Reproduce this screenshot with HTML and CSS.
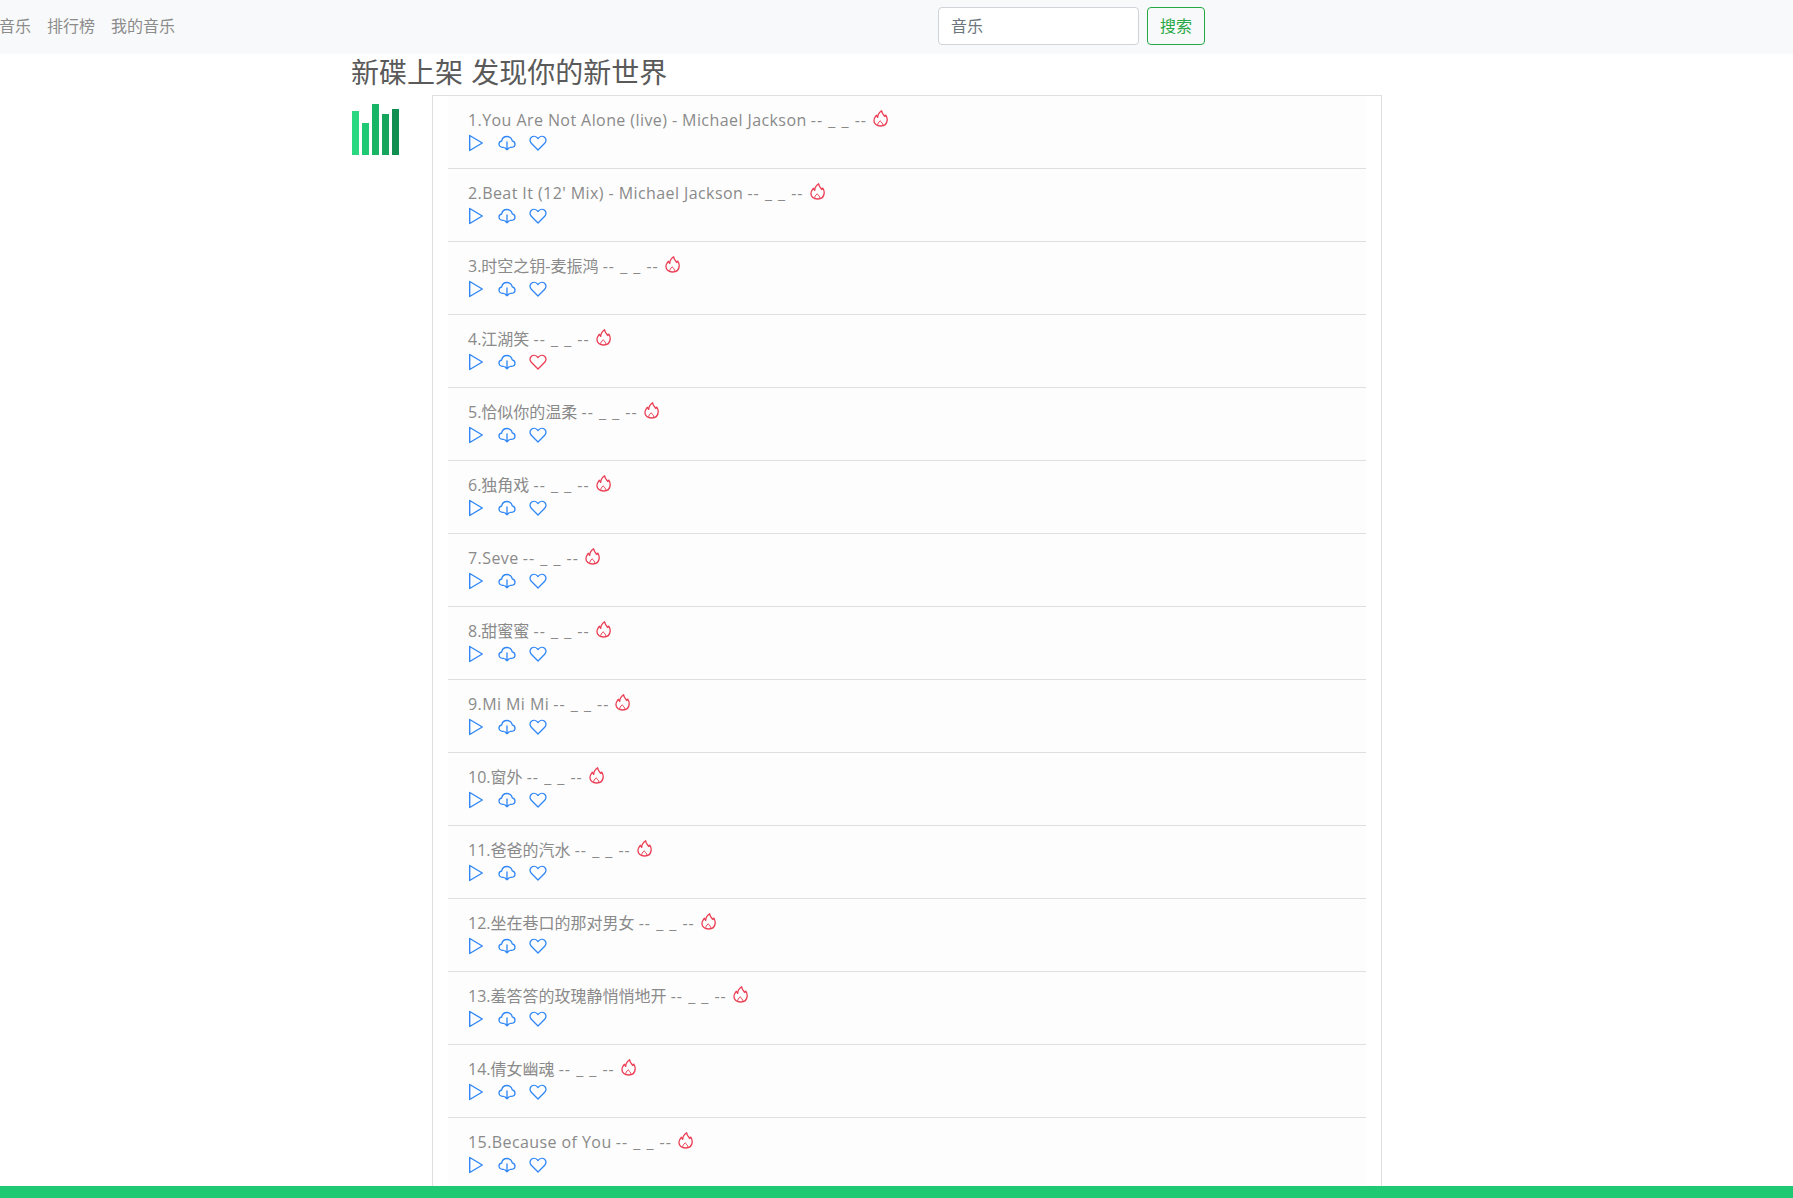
FILE: index.html
```html
<!DOCTYPE html>
<html lang="zh">
<head>
<meta charset="utf-8">
<title>新碟上架</title>
<link rel="stylesheet" href="styles.css">
</head>
<body>
<svg class="defs" width="0" height="0" aria-hidden="true">
  <symbol id="i-play" viewBox="0 0 16 18"><path d="M1.700 1.500 L14.300 9 L1.700 16.500 Z" fill="none" stroke="currentColor" stroke-width="1.400" stroke-linejoin="round"/></symbol>
  <symbol id="i-cloud" viewBox="0 0 18 16"><path d="M5.500 12.300H4.500C2.500 12.300 1 10.900 1 9.100 1 7.500 2.100 6.200 3.700 6 4.100 3.400 6.300 1.500 9 1.500c2.600 0 4.700 1.800 5.200 4.300 1.600.3 2.800 1.600 2.800 3.300 0 1.800-1.500 3.200-3.400 3.200h-1.100M9 6.800v8M6.800 12.700 9 14.900l2.200-2.200" fill="none" stroke="currentColor" stroke-width="1.300" stroke-linecap="round" stroke-linejoin="round"/></symbol>
  <symbol id="i-heart" viewBox="0 0 18 16"><path d="M9 15 2.300 8.300C.6 6.600.6 4 2.200 2.500 3.900.9 6.500 1 8.100 2.600l.9 1 .9-1c1.600-1.600 4.200-1.700 5.900-.1 1.600 1.500 1.600 4.100-.1 5.800Z" fill="none" stroke="currentColor" stroke-width="1.300" stroke-linejoin="round"/></symbol>
  <symbol id="i-fire" viewBox="0 0 16 18"><path d="M9.200.8C9.600 4 11.300 5 12.600 6.800L13.600 5.400C14.800 7.200 15.300 9 15.100 11 14.800 14.600 11.900 17 8 17 4.100 17 1 14.600 1 11.100 1 8.800 2.400 7.200 3.500 5.600L5 7.800C5.100 5 7 2.400 9.200.8Z" fill="none" stroke="currentColor" stroke-width="1.400" stroke-linejoin="round"/><path d="M5.300 16.400C4.500 14.700 5.900 13.100 7.800 11.400 8.300 13 10.900 14.200 10.600 16.400" fill="none" stroke="currentColor" stroke-width="1" stroke-linejoin="round"/></symbol>
</svg>
<nav class="navbar">
  <ul class="nav-links">
    <li><a class="nav-link" href="#">音乐</a></li>
    <li><a class="nav-link" href="#">排行榜</a></li>
    <li><a class="nav-link" href="#">我的音乐</a></li>
  </ul>
  <form class="search">
    <input class="search-input" type="text" value="音乐">
    <button class="search-btn" type="button">搜索</button>
  </form>
</nav>
<main class="page">
  <h3 class="title">新碟上架 发现你的新世界</h3>
  <div class="content">
    <div class="chart">
      <span class="bar bar1"></span><span class="bar bar2"></span><span class="bar bar3"></span><span class="bar bar4"></span><span class="bar bar5"></span>
    </div>
    <div class="panel">
      <ul class="songs">
        <li class="song"><div class="song-title"><span><span class="latin">1.You Are Not Alone (live) - Michael Jackson</span> <span class="sep">-- _ _ --</span></span><svg class="fire"><use href="#i-fire"/></svg></div><div class="actions"><svg class="play"><use href="#i-play"/></svg><svg class="cloud"><use href="#i-cloud"/></svg><svg class="heart"><use href="#i-heart"/></svg></div></li>
        <li class="song"><div class="song-title"><span><span class="latin">2.Beat It (12' Mix) - Michael Jackson</span> <span class="sep">-- _ _ --</span></span><svg class="fire"><use href="#i-fire"/></svg></div><div class="actions"><svg class="play"><use href="#i-play"/></svg><svg class="cloud"><use href="#i-cloud"/></svg><svg class="heart"><use href="#i-heart"/></svg></div></li>
        <li class="song"><div class="song-title"><span>3.时空之钥-麦振鸿 <span class="sep">-- _ _ --</span></span><svg class="fire"><use href="#i-fire"/></svg></div><div class="actions"><svg class="play"><use href="#i-play"/></svg><svg class="cloud"><use href="#i-cloud"/></svg><svg class="heart"><use href="#i-heart"/></svg></div></li>
        <li class="song"><div class="song-title"><span>4.江湖笑 <span class="sep">-- _ _ --</span></span><svg class="fire"><use href="#i-fire"/></svg></div><div class="actions"><svg class="play"><use href="#i-play"/></svg><svg class="cloud"><use href="#i-cloud"/></svg><svg class="heart liked"><use href="#i-heart"/></svg></div></li>
        <li class="song"><div class="song-title"><span>5.恰似你的温柔 <span class="sep">-- _ _ --</span></span><svg class="fire"><use href="#i-fire"/></svg></div><div class="actions"><svg class="play"><use href="#i-play"/></svg><svg class="cloud"><use href="#i-cloud"/></svg><svg class="heart"><use href="#i-heart"/></svg></div></li>
        <li class="song"><div class="song-title"><span>6.独角戏 <span class="sep">-- _ _ --</span></span><svg class="fire"><use href="#i-fire"/></svg></div><div class="actions"><svg class="play"><use href="#i-play"/></svg><svg class="cloud"><use href="#i-cloud"/></svg><svg class="heart"><use href="#i-heart"/></svg></div></li>
        <li class="song"><div class="song-title"><span><span class="latin">7.Seve</span> <span class="sep">-- _ _ --</span></span><svg class="fire"><use href="#i-fire"/></svg></div><div class="actions"><svg class="play"><use href="#i-play"/></svg><svg class="cloud"><use href="#i-cloud"/></svg><svg class="heart"><use href="#i-heart"/></svg></div></li>
        <li class="song"><div class="song-title"><span>8.甜蜜蜜 <span class="sep">-- _ _ --</span></span><svg class="fire"><use href="#i-fire"/></svg></div><div class="actions"><svg class="play"><use href="#i-play"/></svg><svg class="cloud"><use href="#i-cloud"/></svg><svg class="heart"><use href="#i-heart"/></svg></div></li>
        <li class="song"><div class="song-title"><span><span class="latin">9.Mi Mi Mi</span> <span class="sep">-- _ _ --</span></span><svg class="fire"><use href="#i-fire"/></svg></div><div class="actions"><svg class="play"><use href="#i-play"/></svg><svg class="cloud"><use href="#i-cloud"/></svg><svg class="heart"><use href="#i-heart"/></svg></div></li>
        <li class="song"><div class="song-title"><span>10.窗外 <span class="sep">-- _ _ --</span></span><svg class="fire"><use href="#i-fire"/></svg></div><div class="actions"><svg class="play"><use href="#i-play"/></svg><svg class="cloud"><use href="#i-cloud"/></svg><svg class="heart"><use href="#i-heart"/></svg></div></li>
        <li class="song"><div class="song-title"><span>11.爸爸的汽水 <span class="sep">-- _ _ --</span></span><svg class="fire"><use href="#i-fire"/></svg></div><div class="actions"><svg class="play"><use href="#i-play"/></svg><svg class="cloud"><use href="#i-cloud"/></svg><svg class="heart"><use href="#i-heart"/></svg></div></li>
        <li class="song"><div class="song-title"><span>12.坐在巷口的那对男女 <span class="sep">-- _ _ --</span></span><svg class="fire"><use href="#i-fire"/></svg></div><div class="actions"><svg class="play"><use href="#i-play"/></svg><svg class="cloud"><use href="#i-cloud"/></svg><svg class="heart"><use href="#i-heart"/></svg></div></li>
        <li class="song"><div class="song-title"><span>13.羞答答的玫瑰静悄悄地开 <span class="sep">-- _ _ --</span></span><svg class="fire"><use href="#i-fire"/></svg></div><div class="actions"><svg class="play"><use href="#i-play"/></svg><svg class="cloud"><use href="#i-cloud"/></svg><svg class="heart"><use href="#i-heart"/></svg></div></li>
        <li class="song"><div class="song-title"><span>14.倩女幽魂 <span class="sep">-- _ _ --</span></span><svg class="fire"><use href="#i-fire"/></svg></div><div class="actions"><svg class="play"><use href="#i-play"/></svg><svg class="cloud"><use href="#i-cloud"/></svg><svg class="heart"><use href="#i-heart"/></svg></div></li>
        <li class="song"><div class="song-title"><span><span class="latin">15.Because of You</span> <span class="sep">-- _ _ --</span></span><svg class="fire"><use href="#i-fire"/></svg></div><div class="actions"><svg class="play"><use href="#i-play"/></svg><svg class="cloud"><use href="#i-cloud"/></svg><svg class="heart"><use href="#i-heart"/></svg></div></li>
      </ul>
    </div>
  </div>
</main>
<div class="player-bar"></div>
</body>
</html>
```
FILE: styles.css
```css
* { box-sizing: border-box; }
html, body { height: 100%; }
body {
  margin: 0;
  overflow: hidden;
  background: #fff;
  color: #212529;
  font-family: "Open Sans", "Noto Sans CJK SC", sans-serif;
  font-size: 16px;
  line-height: 24px;
}
.defs { position: absolute; }
.navbar {
  display: flex;
  align-items: center;
  height: 54px;
  padding-bottom: 2px;
  background: #f8f9fa;
}
.nav-links {
  display: flex;
  width: 938px;
  margin: 0;
  padding: 0;
  list-style: none;
}
.nav-link {
  display: block;
  padding: 0 8px;
  color: #8c8c8c;
  text-decoration: none;
}
.nav-links li:first-child .nav-link { padding-left: 0; margin-left: -1px; }
.search { display: flex; gap: 8px; }
.search-input {
  width: 201px;
  height: 38px;
  padding: 5px 12px 7px;
  border: 1px solid #ced4da;
  border-radius: 4px;
  background: #fff;
  color: #6c757d;
  font: inherit;
}
.search-btn {
  width: 58px;
  height: 38px;
  padding: 0;
  border: 1px solid #28a745;
  border-radius: 4px;
  background: transparent;
  color: #28a745;
  font: inherit;
}
.page { padding-left: 351px; width: 1382px; }
.title {
  margin: 0 0 8px;
  padding-top: 3px;
  color: #5a5a5a;
  font-size: 28px;
  font-weight: 400;
  line-height: 30px;
  word-spacing: 1px;
}
.content { display: flex; align-items: flex-start; }
.chart {
  display: flex;
  align-items: flex-end;
  gap: 3px;
  flex: none;
  width: 80px;
  height: 51px;
  margin: 9px 0 0 1px;
}
.bar { width: 7px; }
.bar1 { height: 44px; background: #2ad880; }
.bar2 { height: 32px; background: #1fc873; }
.bar3 { height: 51px; background: #19b566; }
.bar4 { height: 41px; background: #15a55c; }
.bar5 { height: 46px; background: #118f50; }
.panel {
  flex: 1;
  padding: 0 15px;
  border: 1px solid #dfdfdf;
  border-bottom: 0;
}
.songs { margin: 0; padding: 0; list-style: none; background: #fdfdfd; }
.song {
  height: 73px;
  padding: 11px 20px 0;
  border-bottom: 1px solid #dfdfdf;
}
.song-title { display: flex; align-items: center; gap: 6px; height: 24px; padding-top: 2px; color: #8a8a8a; white-space: nowrap; }
.latin { letter-spacing: .42px; }
.sep { letter-spacing: 1px; }
.fire { width: 15px; height: 17px; color: #ea3c52; margin-top: -3px; }
.actions { display: flex; align-items: center; height: 24px; }
.actions svg { flex: none; }
.play { width: 16px; height: 18px; color: #2f86f6; margin-right: 14px; }
.cloud { width: 18px; height: 16px; color: #2f86f6; margin-right: 13px; }
.heart { width: 18px; height: 16px; color: #2f86f6; }
.heart.liked { color: #ea3c52; }
.player-bar {
  position: fixed;
  left: 0;
  right: 0;
  bottom: 0;
  height: 12px;
  background: #1fc873;
}
```
